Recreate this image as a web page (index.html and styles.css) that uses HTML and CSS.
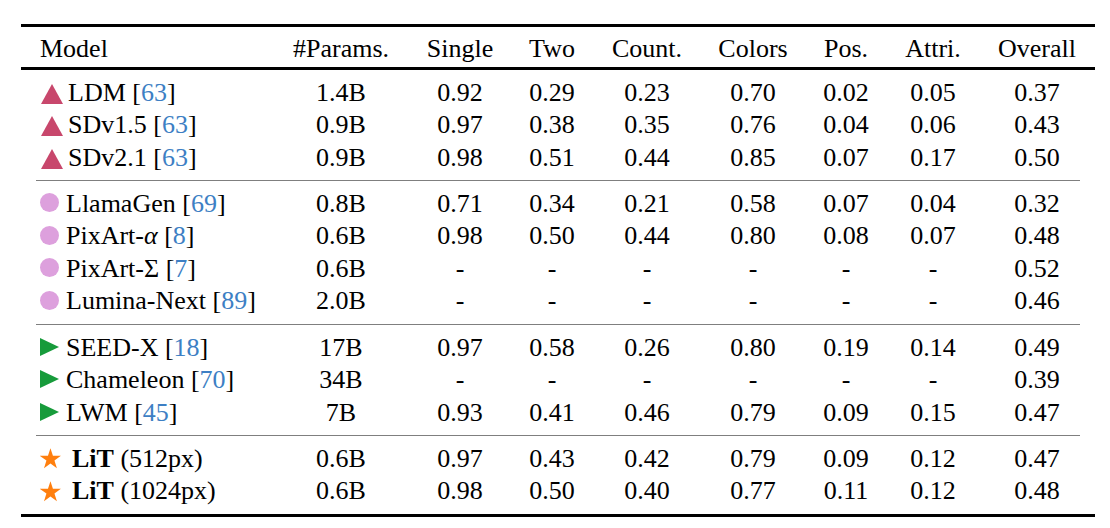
FILE: index.html
```html
<!DOCTYPE html>
<html>
<head>
<meta charset="utf-8">
<link rel="stylesheet" href="styles.css">
</head>
<body>
<div class="page">
  <div class="tbl">
    <div class="row head">
      <div class="c model">Model</div>
      <div class="c">#Params.</div>
      <div class="c">Single</div>
      <div class="c">Two</div>
      <div class="c">Count.</div>
      <div class="c">Colors</div>
      <div class="c">Pos.</div>
      <div class="c">Attri.</div>
      <div class="c">Overall</div>
    </div>

    <div class="group">
      <div class="row">
        <div class="c model"><svg class="ic tri" width="22" height="20" viewBox="0 0 22 20"><path d="M11 0L22 20H0Z" fill="#c8476c"/></svg><span>LDM <a class="cite">[<span>63</span>]</a></span></div>
        <div class="c">1.4B</div><div class="c">0.92</div><div class="c">0.29</div><div class="c">0.23</div><div class="c">0.70</div><div class="c">0.02</div><div class="c">0.05</div><div class="c">0.37</div>
      </div>
      <div class="row">
        <div class="c model"><svg class="ic tri" width="22" height="20" viewBox="0 0 22 20"><path d="M11 0L22 20H0Z" fill="#c8476c"/></svg><span>SDv1.5 <a class="cite">[<span>63</span>]</a></span></div>
        <div class="c">0.9B</div><div class="c">0.97</div><div class="c">0.38</div><div class="c">0.35</div><div class="c">0.76</div><div class="c">0.04</div><div class="c">0.06</div><div class="c">0.43</div>
      </div>
      <div class="row">
        <div class="c model"><svg class="ic tri" width="22" height="20" viewBox="0 0 22 20"><path d="M11 0L22 20H0Z" fill="#c8476c"/></svg><span>SDv2.1 <a class="cite">[<span>63</span>]</a></span></div>
        <div class="c">0.9B</div><div class="c">0.98</div><div class="c">0.51</div><div class="c">0.44</div><div class="c">0.85</div><div class="c">0.07</div><div class="c">0.17</div><div class="c">0.50</div>
      </div>
    </div>
    <div class="midrule"></div>

    <div class="group">
      <div class="row">
        <div class="c model"><svg class="ic dot" width="19" height="19" viewBox="0 0 19 19"><circle cx="9.5" cy="9.5" r="9.5" fill="#dda0dd"/></svg><span>LlamaGen <a class="cite">[<span>69</span>]</a></span></div>
        <div class="c">0.8B</div><div class="c">0.71</div><div class="c">0.34</div><div class="c">0.21</div><div class="c">0.58</div><div class="c">0.07</div><div class="c">0.04</div><div class="c">0.32</div>
      </div>
      <div class="row">
        <div class="c model"><svg class="ic dot" width="19" height="19" viewBox="0 0 19 19"><circle cx="9.5" cy="9.5" r="9.5" fill="#dda0dd"/></svg><span>PixArt-<i>α</i> <a class="cite">[<span>8</span>]</a></span></div>
        <div class="c">0.6B</div><div class="c">0.98</div><div class="c">0.50</div><div class="c">0.44</div><div class="c">0.80</div><div class="c">0.08</div><div class="c">0.07</div><div class="c">0.48</div>
      </div>
      <div class="row">
        <div class="c model"><svg class="ic dot" width="19" height="19" viewBox="0 0 19 19"><circle cx="9.5" cy="9.5" r="9.5" fill="#dda0dd"/></svg><span>PixArt-Σ <a class="cite">[<span>7</span>]</a></span></div>
        <div class="c">0.6B</div><div class="c">-</div><div class="c">-</div><div class="c">-</div><div class="c">-</div><div class="c">-</div><div class="c">-</div><div class="c">0.52</div>
      </div>
      <div class="row">
        <div class="c model"><svg class="ic dot" width="19" height="19" viewBox="0 0 19 19"><circle cx="9.5" cy="9.5" r="9.5" fill="#dda0dd"/></svg><span>Lumina-Next <a class="cite">[<span>89</span>]</a></span></div>
        <div class="c">2.0B</div><div class="c">-</div><div class="c">-</div><div class="c">-</div><div class="c">-</div><div class="c">-</div><div class="c">-</div><div class="c">0.46</div>
      </div>
    </div>
    <div class="midrule"></div>

    <div class="group">
      <div class="row">
        <div class="c model"><svg class="ic play" width="19" height="18" viewBox="0 0 19 18"><path d="M0 0L19 9L0 18Z" fill="#179b3b"/></svg><span>SEED-X <a class="cite">[<span>18</span>]</a></span></div>
        <div class="c">17B</div><div class="c">0.97</div><div class="c">0.58</div><div class="c">0.26</div><div class="c">0.80</div><div class="c">0.19</div><div class="c">0.14</div><div class="c">0.49</div>
      </div>
      <div class="row">
        <div class="c model"><svg class="ic play" width="19" height="18" viewBox="0 0 19 18"><path d="M0 0L19 9L0 18Z" fill="#179b3b"/></svg><span>Chameleon <a class="cite">[<span>70</span>]</a></span></div>
        <div class="c">34B</div><div class="c">-</div><div class="c">-</div><div class="c">-</div><div class="c">-</div><div class="c">-</div><div class="c">-</div><div class="c">0.39</div>
      </div>
      <div class="row">
        <div class="c model"><svg class="ic play" width="19" height="18" viewBox="0 0 19 18"><path d="M0 0L19 9L0 18Z" fill="#179b3b"/></svg><span>LWM <a class="cite">[<span>45</span>]</a></span></div>
        <div class="c">7B</div><div class="c">0.93</div><div class="c">0.41</div><div class="c">0.46</div><div class="c">0.79</div><div class="c">0.09</div><div class="c">0.15</div><div class="c">0.47</div>
      </div>
    </div>
    <div class="midrule"></div>

    <div class="group">
      <div class="row">
        <div class="c model"><svg class="ic star" width="22" height="21" viewBox="0 0 20 19"><path d="M9.5 0.2L11.75 7.1L19.01 7.11L13.14 11.38L15.38 18.29L9.5 14.02L3.62 18.29L5.86 11.38L-0.01 7.11L7.25 7.1Z" fill="#ff7f0e"/></svg><span><b>LiT</b> (512px)</span></div>
        <div class="c">0.6B</div><div class="c">0.97</div><div class="c">0.43</div><div class="c">0.42</div><div class="c">0.79</div><div class="c">0.09</div><div class="c">0.12</div><div class="c">0.47</div>
      </div>
      <div class="row">
        <div class="c model"><svg class="ic star" width="22" height="21" viewBox="0 0 20 19"><path d="M9.5 0.2L11.75 7.1L19.01 7.11L13.14 11.38L15.38 18.29L9.5 14.02L3.62 18.29L5.86 11.38L-0.01 7.11L7.25 7.1Z" fill="#ff7f0e"/></svg><span><b>LiT</b> (1024px)</span></div>
        <div class="c">0.6B</div><div class="c">0.98</div><div class="c">0.50</div><div class="c">0.40</div><div class="c">0.77</div><div class="c">0.11</div><div class="c">0.12</div><div class="c">0.48</div>
      </div>
    </div>
  </div>
</div>
</body>
</html>
```

FILE: styles.css
```css
html, body {
  margin: 0;
  padding: 0;
  background: #ffffff;
}

.page {
  padding: 24px 0 0 21px;
  font-family: "Liberation Serif", "Times New Roman", serif;
  font-size: 26px;
  color: #000;
}

.tbl {
  width: 1074px;
  border-top: 3px solid #000;
  border-bottom: 3px solid #000;
}

.row {
  display: grid;
  grid-template-columns: 252px 136px 102px 82px 108px 104px 82px 92px 116px;
  height: 32.5px;
  align-items: center;
}

.row.head {
  height: 40px;
  padding-top: 3px;
  box-sizing: border-box;
  border-bottom: 3px solid #000;
  height: 43px;
}

.group {
  padding: 6.4px 0;
}

.midrule {
  margin: 0 15px;
  border-top: 1px solid #7f7f7f;
}

.c {
  text-align: center;
  white-space: nowrap;
  line-height: 1;
}

.c.model {
  text-align: left;
  padding-left: 19px;
  display: flex;
  align-items: center;
}

.ic {
  flex: none;
  display: block;
}

.ic.tri {
  margin-left: 1px;
  margin-right: 5px;
  position: relative;
  top: 1px;
}

.ic.dot {
  margin-right: 7px;
  position: relative;
  top: -1px;
}

.ic.play {
  margin-right: 7px;
  position: relative;
  top: -1px;
}

.ic.star {
  margin-right: 10px;
  position: relative;
  top: 0;
}

.cite {
  color: #000;
  text-decoration: none;
}

.cite span {
  color: #3d7fc4;
}

b {
  font-weight: bold;
}
```
